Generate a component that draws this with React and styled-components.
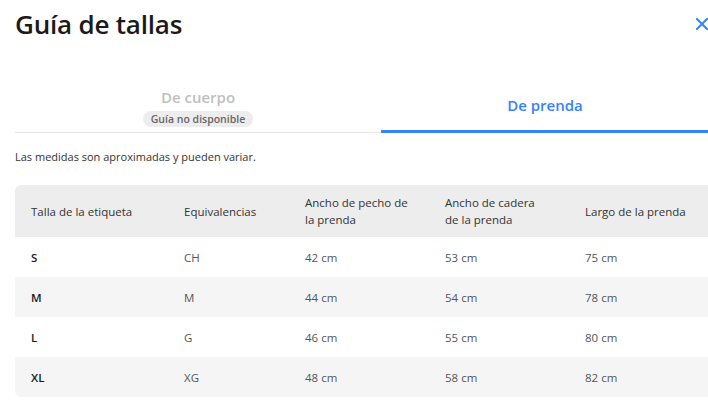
import React from 'react';
import styled, { createGlobalStyle } from 'styled-components';

const GlobalStyle = createGlobalStyle`
  html, body {
    margin: 0;
    padding: 0;
    background: #fff;
    overflow: hidden;
  }
  body {
    font-family: "Open Sans", "Liberation Sans", sans-serif;
    color: #333;
  }
`;

// Modal shell, clipped at the viewport edge like the reference
const Modal = styled.div`
  width: 708px;
  height: 415px;
  overflow: hidden;
  background: #fff;
`;

const Header = styled.div`
  display: flex;
  align-items: center;
  justify-content: space-between;
  padding: 8px 0 0 15px;
  height: 32px;
`;

const Title = styled.h1`
  margin: 0;
  font-size: 26px;
  font-weight: 600;
  color: #1a1a1a;
  letter-spacing: -0.2px;
`;

const CloseButton = styled.button`
  border: 0;
  background: none;
  padding: 0;
  margin-right: -1px;
  width: 14px;
  height: 14px;
  display: flex;
  align-items: center;
  justify-content: center;
  cursor: pointer;
`;

const Body = styled.div`
  width: 732px;
  padding-left: 15px;
`;

const Tabs = styled.div`
  display: grid;
  grid-template-columns: 366px 1fr;
  width: 694px;
  margin-top: 46px;
  border-bottom: 1px solid #e6e6e6;
`;

const Tab = styled.div`
  height: 47px;
  display: flex;
  flex-direction: column;
  align-items: center;
  justify-content: ${p => (p.active ? 'center' : 'flex-start')};
  box-sizing: border-box;
  padding-top: ${p => (p.active ? '0' : '1px')};
  padding-bottom: ${p => (p.active ? '6px' : '0')};
  border-bottom: 3px solid ${p => (p.active ? '#3483fa' : 'transparent')};
  margin-bottom: -1px;
`;

const TabLabel = styled.span`
  font-size: 15px;
  font-weight: 600;
  line-height: 20px;
  color: ${p => (p.active ? '#3483fa' : '#bfbfbf')};
`;

const Badge = styled.span`
  margin-top: 4px;
  background: #ededed;
  color: #666;
  font-size: 10.5px;
  font-weight: 600;
  line-height: 16px;
  padding: 0 8px;
  border-radius: 8px;
`;

const Note = styled.p`
  margin: 16px 0 0;
  font-size: 11px;
  line-height: 16px;
  color: #333;
`;

const Table = styled.div`
  margin-top: 20px;
  border-radius: 6px;
  overflow: hidden;
`;

const Row = styled.div`
  display: grid;
  grid-template-columns: 153px 121px 140px 140px 1fr;
  align-items: center;
  height: ${p => (p.head ? '52px' : '40px')};
  background: ${p => (p.head ? '#ededed' : p.shade ? '#f5f5f5' : '#fff')};
`;

const Cell = styled.div`
  padding-left: 16px;
  font-size: 11.5px;
  line-height: 17px;
  font-weight: ${p => (p.strong ? 600 : 400)};
  color: ${p => (p.head ? '#333' : p.strong ? '#1a1a1a' : '#555')};
`;

const columns = [
  'Talla de la etiqueta',
  'Equivalencias',
  ['Ancho de pecho de', 'la prenda'],
  ['Ancho de cadera', 'de la prenda'],
  'Largo de la prenda',
];

const sizes = [
  ['S', 'CH', '42 cm', '53 cm', '75 cm'],
  ['M', 'M', '44 cm', '54 cm', '78 cm'],
  ['L', 'G', '46 cm', '55 cm', '80 cm'],
  ['XL', 'XG', '48 cm', '58 cm', '82 cm'],
];

const CloseIcon = () => (
  <svg width="12" height="12" viewBox="0 0 12 12">
    <path d="M1 1L11 11M11 1L1 11" stroke="#3483fa" strokeWidth="2" strokeLinecap="square" />
  </svg>
);

const App = () => (
  <>
    <GlobalStyle />
    <Modal>
      <Header>
        <Title>Guía de tallas</Title>
        <CloseButton aria-label="Cerrar">
          <CloseIcon />
        </CloseButton>
      </Header>
      <Body>
        <Tabs>
          <Tab>
            <TabLabel>De cuerpo</TabLabel>
            <Badge>Guía no disponible</Badge>
          </Tab>
          <Tab active>
            <TabLabel active>De prenda</TabLabel>
          </Tab>
        </Tabs>
        <Note>Las medidas son aproximadas y pueden variar.</Note>
        <Table>
          <Row head>
            {columns.map((c, i) => (
              <Cell head key={i}>
                {Array.isArray(c) ? (
                  <>
                    {c[0]}
                    <br />
                    {c[1]}
                  </>
                ) : (
                  c
                )}
              </Cell>
            ))}
          </Row>
          {sizes.map((row, r) => (
            <Row key={row[0]} shade={r % 2 === 1}>
              {row.map((v, i) => (
                <Cell key={i} strong={i === 0}>
                  {v}
                </Cell>
              ))}
            </Row>
          ))}
        </Table>
      </Body>
    </Modal>
  </>
);

export default App;
